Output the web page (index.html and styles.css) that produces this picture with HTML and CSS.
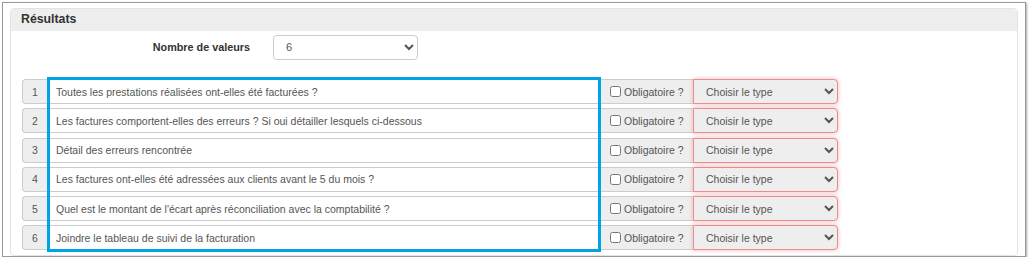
FILE: index.html
```html
<!DOCTYPE html>
<html lang="fr">
<head>
    <meta charset="UTF-8">
    <title>Résultats</title>
    <link rel="stylesheet" href="styles.css">
</head>
<body>
    <div class="frame">
        <div class="panel">
            <div class="panel-heading">Résultats</div>
            <div class="panel-body">
                <div class="form-line">
                    <label class="form-label">Nombre de valeurs</label>
                    <select class="count-select">
                        <option>6</option>
                    </select>
                </div>

                <div class="questions">
                    <div class="q-row">
                        <span class="q-num">1</span>
                        <input class="q-text" type="text" value="Toutes les prestations réalisées ont-elles été facturées ?">
                        <label class="q-check"><input type="checkbox"> Obligatoire ?</label>
                        <select class="q-type"><option>Choisir le type</option></select>
                    </div>
                    <div class="q-row">
                        <span class="q-num">2</span>
                        <input class="q-text" type="text" value="Les factures comportent-elles des erreurs ? Si oui détailler lesquels ci-dessous">
                        <label class="q-check"><input type="checkbox"> Obligatoire ?</label>
                        <select class="q-type"><option>Choisir le type</option></select>
                    </div>
                    <div class="q-row">
                        <span class="q-num">3</span>
                        <input class="q-text" type="text" value="Détail des erreurs rencontrée">
                        <label class="q-check"><input type="checkbox"> Obligatoire ?</label>
                        <select class="q-type"><option>Choisir le type</option></select>
                    </div>
                    <div class="q-row">
                        <span class="q-num">4</span>
                        <input class="q-text" type="text" value="Les factures ont-elles été adressées aux clients avant le 5 du mois ?">
                        <label class="q-check"><input type="checkbox"> Obligatoire ?</label>
                        <select class="q-type"><option>Choisir le type</option></select>
                    </div>
                    <div class="q-row">
                        <span class="q-num">5</span>
                        <input class="q-text" type="text" value="Quel est le montant de l'écart après réconciliation avec la comptabilité ?">
                        <label class="q-check"><input type="checkbox"> Obligatoire ?</label>
                        <select class="q-type"><option>Choisir le type</option></select>
                    </div>
                    <div class="q-row">
                        <span class="q-num">6</span>
                        <input class="q-text" type="text" value="Joindre le tableau de suivi de la facturation">
                        <label class="q-check"><input type="checkbox"> Obligatoire ?</label>
                        <select class="q-type"><option>Choisir le type</option></select>
                    </div>
                </div>
            </div>
        </div>
        <div class="highlight"></div>
    </div>
</body>
</html>
```

FILE: styles.css
```css
body {
  margin: 0;
  background: #fff;
  font-family: "Liberation Sans", Arial, sans-serif;
  color: #333;
}
.frame {
  position: relative;
  margin: 2px 0 0 2px;
  width: 1024px;
  height: 255px;
  border: 1px solid #9a9a9a;
  box-shadow: 1px 1px 2px rgba(0,0,0,0.35);
  padding: 5px 7px 0 7px;
  box-sizing: border-box;
}
.panel {
  border: 1px solid #e3e3e3;
  border-radius: 4px;
  height: 248px;
  box-sizing: border-box;
}
.panel-heading {
  background: #eeeeee;
  height: 22px;
  line-height: 21px;
  padding-left: 10px;
  font-size: 12.3px;
  font-weight: bold;
  color: #333;
  border-radius: 4px 4px 0 0;
}
.panel-body {
  padding: 3px 11px 0 11px;
}
.form-line {
  display: flex;
  align-items: center;
  height: 26px;
}
.form-label {
  width: 228px;
  text-align: right;
  font-size: 10.8px;
  font-weight: bold;
  color: #333;
  padding-right: 23px;
}
.count-select {
  width: 145px;
  height: 25px;
  border: 1px solid #ccc;
  border-radius: 4px;
  background: #fff;
  font-family: "Liberation Sans", Arial, sans-serif;
  font-size: 11px;
  color: #555;
  padding-left: 8px;
}
.questions {
  margin-top: 19px;
  display: flex;
  flex-direction: column;
  gap: 4.3px;
}
.q-row {
  display: flex;
  height: 25px;
  font-size: 10.5px;
  color: #555;
}
.q-num {
  width: 25px;
  box-sizing: border-box;
  background: #eee;
  border: 1px solid #ccc;
  border-right: none;
  border-radius: 4px 0 0 4px;
  display: flex;
  align-items: center;
  justify-content: center;
}
.q-text {
  width: 553px;
  box-sizing: border-box;
  border: 1px solid #ccc;
  padding: 0 8px;
  font-family: "Liberation Sans", Arial, sans-serif;
  font-size: 10.5px;
  color: #555;
  height: 25px;
}
.q-check {
  width: 93px;
  box-sizing: border-box;
  background: #eee;
  border: 1px solid #ccc;
  border-left: none;
  border-right: none;
  display: flex;
  align-items: center;
  padding-left: 10px;
  white-space: nowrap;
}
.q-check input {
  margin: 0 3px 0 0;
  width: 11px;
  height: 11px;
}
.q-type {
  width: 145px;
  height: 25px;
  box-sizing: border-box;
  border: 1px solid #e88d8f;
  border-radius: 0 4px 4px 0;
  box-shadow: 0 0 4px rgba(235,120,120,0.55);
  background: #eee;
  font-family: "Liberation Sans", Arial, sans-serif;
  font-size: 10.5px;
  color: #555;
  padding-left: 8px;
}
.highlight {
  position: absolute;
  left: 44px;
  top: 74px;
  width: 554px;
  height: 175px;
  border: 3px solid #00a3e4;
  box-sizing: border-box;
}
```
